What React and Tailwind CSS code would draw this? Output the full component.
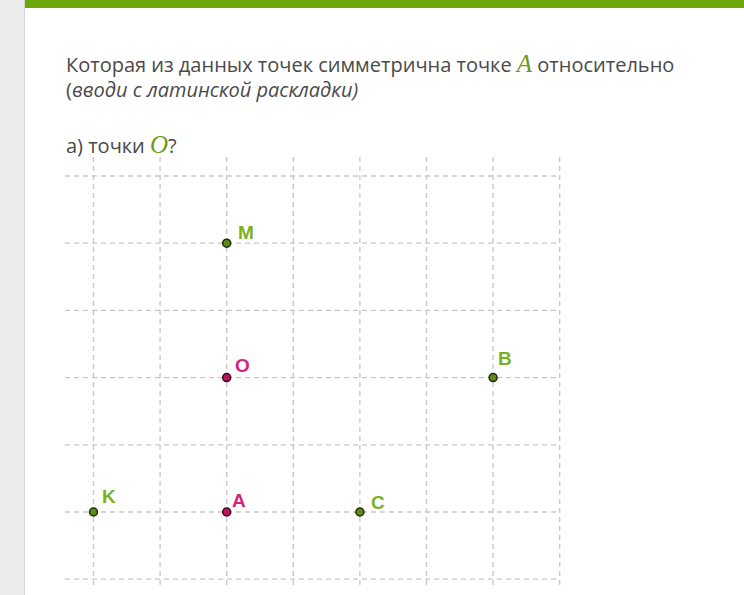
import React from 'react';

const COLS = [0, 1, 2, 3, 4, 5, 6, 7].map((i) => 28.5 + i * 66.6);
const ROWS = [0, 1, 2, 3, 4, 5, 6].map((i) => 20 + i * 67.2);

const points = [
  { name: 'M', c: 2, r: 1, lx: 173, ly: 83, pink: false },
  { name: 'O', c: 2, r: 3, lx: 170, ly: 216, pink: true },
  { name: 'B', c: 6, r: 3, lx: 433, ly: 209, pink: false },
  { name: 'K', c: 0, r: 5, lx: 37, ly: 347, pink: false },
  { name: 'A', c: 2, r: 5, lx: 167, ly: 351, pink: true },
  { name: 'C', c: 4, r: 5, lx: 306, ly: 353, pink: false },
];

const Grid = () => (
  <svg width="500" height="440" className="block -ml-[1px] -mt-[2px]">
    {COLS.map((x) => (
      <line key={'v' + x} x1={x} y1={1} x2={x} y2={430} stroke="#c6c6c6" strokeWidth="1.3" strokeDasharray="5 4" />
    ))}
    {ROWS.map((y) => (
      <line key={'h' + y} x1={0} y1={y} x2={COLS[7]} y2={y} stroke="#c6c6c6" strokeWidth="1.3" strokeDasharray="5 4" />
    ))}
    {points.map((p) => (
      <g key={p.name}>
        <circle
          cx={COLS[p.c]}
          cy={ROWS[p.r]}
          r="4"
          fill={p.pink ? '#b8165f' : '#5e8a18'}
          stroke={p.pink ? '#3d0620' : '#1f2b08'}
          strokeWidth="1.5"
        />
        <text
          x={p.lx}
          y={p.ly}
          fill={p.pink ? '#d6237b' : '#7bb01c'}
          fontFamily="'Liberation Sans', Arial, sans-serif"
          fontWeight="700"
          fontSize="19"
        >
          {p.name}
        </text>
      </g>
    ))}
  </svg>
);

const MathVar = ({ children }) => (
  <span className="font-['Liberation_Serif',serif] italic text-[25px] leading-none text-[#6b9c12]">{children}</span>
);

export default function App() {
  return (
    <div className="flex min-h-[595px] bg-white font-['Open_Sans',sans-serif] text-[#4a4a4a]">
      <div className="w-[25px] shrink-0 bg-[#ececec] border-r border-[#d6d6d6]" />
      <div className="flex-1">
        <div className="h-[8px] bg-[#6ca80c]" />
        <div className="pl-[41px] pt-[43px]">
          <p className="text-[20px] leading-[25px]">
            Которая из данных точек симметрична точке <MathVar>A</MathVar> относительно
            <br />
            (<i>вводи с латинской раскладки)</i>
          </p>
          <p className="mt-[30px] text-[20px] leading-[25px]">
            а) точки <MathVar>O</MathVar>?
          </p>
          <Grid />
        </div>
      </div>
    </div>
  );
}
